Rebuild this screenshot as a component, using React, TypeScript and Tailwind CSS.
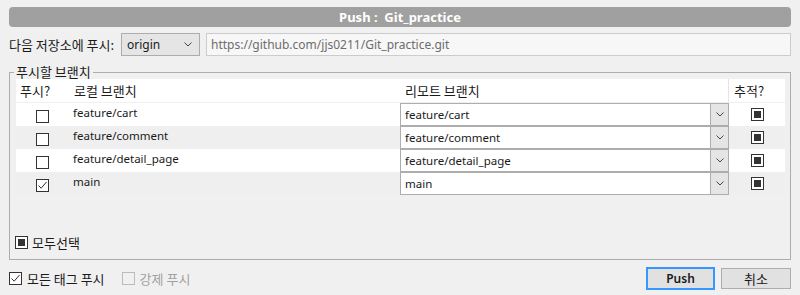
const branches = [
  { name: "feature/cart", push: false },
  { name: "feature/comment", push: false },
  { name: "feature/detail_page", push: false },
  { name: "main", push: true },
];

const ko = "font-['Noto_Sans_CJK_KR',sans-serif] text-[13px]";

function Chevron() {
  return (
    <svg width="8" height="5" viewBox="0 0 8 5" className="text-[#444]">
      <polyline points="0.5,0.5 4,4 7.5,0.5" fill="none" stroke="currentColor" strokeWidth="1" />
    </svg>
  );
}

function CheckBox({ checked, disabled }: { checked?: boolean; disabled?: boolean }) {
  return (
    <div
      className={`w-[13px] h-[13px] border flex items-center justify-center shrink-0 ${
        disabled ? "border-[#bcbcbc] bg-[#f0f0f0]" : "border-[#333] bg-white"
      }`}
    >
      {checked && (
        <svg width="11" height="11" viewBox="0 0 11 11">
          <polyline points="1.5,5.5 4.2,8.2 9.5,2" fill="none" stroke="#333" strokeWidth="1" />
        </svg>
      )}
    </div>
  );
}

function FilledBox() {
  return (
    <div className="w-[13px] h-[13px] border-[1.5px] border-[#333] bg-white flex items-center justify-center shrink-0">
      <div className="w-[7px] h-[7px] bg-[#333]" />
    </div>
  );
}

export default function App() {
  return (
    <div className="w-[800px] h-[295px] bg-[#f0f0f0] px-[9px] pt-[7px] text-[12px] text-[#1a1a1a] font-['Noto_Sans','Noto_Sans_CJK_KR',sans-serif] leading-none overflow-hidden">
      <div className="h-[20px] rounded-[4px] bg-[#a0a0a0] flex items-center justify-center text-white font-bold text-[13px]">
        Push :&nbsp; Git_practice
      </div>

      <div className="mt-[6px] flex items-center h-[23px]">
        <span className={`w-[112px] ${ko}`}>다음 저장소에 푸시:</span>
        <div className="w-[79px] h-[23px] border border-[#adadad] bg-[#e5e5e5] flex items-center justify-between pl-[5px] pr-[7px]">
          <span>origin</span>
          <Chevron />
        </div>
        <div className="ml-[6px] flex-1 h-[23px] border border-[#cccccc] bg-[#f7f7f7] flex items-center pl-[4px] text-[#6d6d6d]">
          https://github.com/jjs0211/Git_practice.git
        </div>
      </div>

      <div className="relative mt-[16px] h-[188px] border border-[#adadad] pt-[6px] pl-[6px] pr-[5px]">
        <span className={`absolute -top-[8px] left-[4px] bg-[#f0f0f0] px-[2px] ${ko}`}>
          푸시할 브랜치
        </span>

        <div className={`h-[24px] bg-white flex items-center border-b border-[#f0f0f0] ${ko}`}>
          <span className="w-[54px] pl-[4px]">푸시?</span>
          <span className="w-[330px] pl-[4px]">로컬 브랜치</span>
          <span className="w-[328px] pl-[5px]">리모트 브랜치</span>
          <span className="h-full flex items-center border-l border-[#e5e5e5] pl-[5px]">추적?</span>
        </div>

        {branches.map((b, i) => (
          <div key={b.name} className={`h-[23px] flex text-[11.5px] ${i % 2 === 0 ? "bg-white" : "bg-[#efefef]"}`}>
            <div className="w-[54px] flex items-end justify-center pb-[3px] pr-[2px]">
              <CheckBox checked={b.push} />
            </div>
            <div className="w-[330px] pl-[3px] pt-[4px]">{b.name}</div>
            <div className="w-[329px] h-[23px] border border-[#adadad] bg-white flex">
              <span className="flex-1 flex items-center pl-[4px]">{b.name}</span>
              <span className="w-[18px] border-l border-[#adadad] bg-[#e5e5e5] flex items-center justify-center">
                <Chevron />
              </span>
            </div>
            <div className="flex-1 flex items-center justify-center pl-[1px]">
              <FilledBox />
            </div>
          </div>
        ))}

        <div className={`absolute left-[5px] top-[163px] flex items-center gap-[4px] ${ko}`}>
          <FilledBox />
          <span>모두선택</span>
        </div>
      </div>

      <div className="mt-[6px] flex items-center h-[25px]">
        <CheckBox checked />
        <span className={`ml-[5px] ${ko}`}>모든 태그 푸시</span>
        <div className="ml-[17px]">
          <CheckBox disabled />
        </div>
        <span className={`ml-[5px] text-[#a0a0a0] ${ko}`}>강제 푸시</span>
        <div className="flex-1" />
        <button className="w-[69px] h-[23px] border-2 border-[#3399ff] bg-[#e1e1e1] font-semibold text-[12px]">
          Push
        </button>
        <button className={`ml-[6px] w-[70px] h-[21px] border border-[#adadad] bg-[#e1e1e1] ${ko}`}>
          취소
        </button>
      </div>
    </div>
  );
}
